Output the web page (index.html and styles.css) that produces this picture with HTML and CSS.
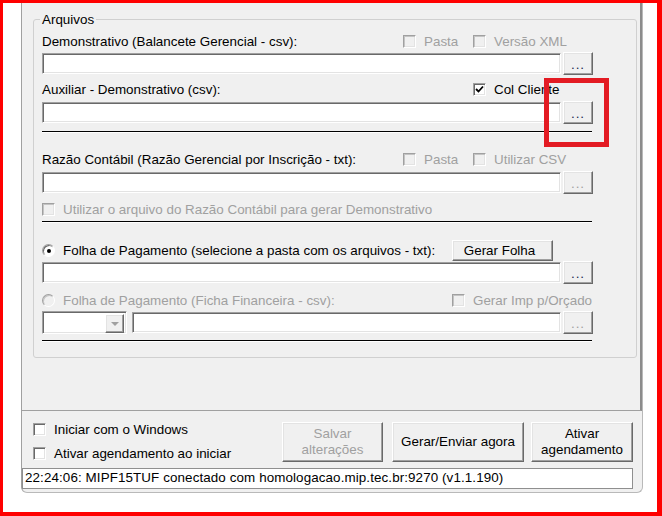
FILE: index.html
```html
<!DOCTYPE html>
<html lang="pt-BR">
<head>
<meta charset="UTF-8">
<meta name="viewport" content="width=device-width, initial-scale=1.0">
<title>Configuração de Arquivos</title>
<link rel="stylesheet" href="styles.css">
</head>
<body>
<div class="frame">
    <div class="window">
        <div class="main">
            <fieldset class="group">
                <legend>Arquivos</legend>

                <div class="row label-row">
                    <span class="label">Demonstrativo (Balancete Gerencial - csv):</span>
                    <span class="check disabled w70 push"><span class="box"></span>Pasta</span>
                    <span class="check disabled w120"><span class="box"></span>Versão XML</span>
                </div>
                <div class="row field-row mt3">
                    <span class="input"></span>
                    <span class="btn dots">...</span>
                </div>

                <div class="row label-row mt7">
                    <span class="label">Auxiliar - Demonstrativo (csv):</span>
                    <span class="check w120 push">
                        <span class="box"><svg width="9" height="9" viewBox="0 0 9 9"><path d="M1 4 L3.5 6.5 L8 1.5" fill="none" stroke="#000" stroke-width="1.8"/></svg></span>Col Cliente
                    </span>
                </div>
                <div class="row field-row mt4">
                    <span class="input"></span>
                    <span class="btn dots">...</span>
                </div>
                <div class="sep mt7"></div>

                <div class="row label-row mt19">
                    <span class="label">Razão Contábil (Razão Gerencial por Inscrição - txt):</span>
                    <span class="check disabled w70 push"><span class="box"></span>Pasta</span>
                    <span class="check disabled w120"><span class="box"></span>Utilizar CSV</span>
                </div>
                <div class="row field-row mt4">
                    <span class="input"></span>
                    <span class="btn dots disabled">...</span>
                </div>
                <div class="row label-row mt8">
                    <span class="check disabled"><span class="box"></span>Utilizar o arquivo do Razão Contábil para gerar Demonstrativo</span>
                </div>
                <div class="sep mt4"></div>

                <div class="row radio-row mt17">
                    <span class="check"><span class="radio on"></span>Folha de Pagamento (selecione a pasta com os arquivos - txt):</span>
                    <span class="btn folha push">Gerar Folha</span>
                </div>
                <div class="row field-row">
                    <span class="input"></span>
                    <span class="btn dots">...</span>
                </div>
                <div class="row label-row mt9">
                    <span class="check disabled"><span class="radio"></span>Folha de Pagamento (Ficha Financeira - csv):</span>
                    <span class="check disabled w141 push"><span class="box"></span>Gerar Imp p/Orçado</span>
                </div>
                <div class="row field-row mt3">
                    <span class="combo"><span class="btn combo-btn"><span class="arrow"></span></span></span>
                    <span class="input short"></span>
                    <span class="btn dots disabled">...</span>
                </div>
                <div class="sep mt6"></div>
            </fieldset>
        </div>

        <div class="controls">
            <div class="options">
                <span class="check"><span class="box"></span>Iniciar com o Windows</span>
                <span class="check"><span class="box"></span>Ativar agendamento ao iniciar</span>
            </div>
            <span class="btn big salvar disabled">Salvar<br>alterações</span>
            <span class="btn big gerar">Gerar/Enviar agora</span>
            <span class="btn big ativar">Ativar<br>agendamento</span>
        </div>
        <div class="status">22:24:06: MIPF15TUF conectado com homologacao.mip.tec.br:9270 (v1.1.190)</div>
    </div>

    <div class="highlight"></div>
</div>
</body>
</html>
```

FILE: styles.css
```css
* {
    box-sizing: border-box;
}

body {
    margin: 0;
    background: #fff;
    font-family: "Liberation Sans", Arial, sans-serif;
    font-size: 13.4px;
    line-height: 15px;
    color: #000;
}

.frame {
    position: relative;
    width: 662px;
    height: 516px;
    border-style: solid;
    border-color: #ff0000;
    border-width: 3px 5px 4px 3px;
    padding: 0 14px 0 18px;
    background: #fff;
}

.window {
    background: #f0f0f0;
    border: 1px solid #b9b9b9;
    border-top: none;
    border-left-color: #a0a0a0;
    border-radius: 0 0 6px 6px;
}

.main {
    height: 408px;
    padding: 9px 0 0 11px;
    border-right: 2px solid #8c8c8c;
    border-bottom: 1px solid #a0a0a0;
}

/* group box */
.group {
    margin: 0;
    width: 604px;
    padding: 7px 43px 15px 8px;
    border: 1px solid #d0d0d0;
    border-radius: 3px;
}

.group legend {
    padding: 0 2px;
    margin-left: -2px;
    line-height: 15px;
}

.row {
    display: flex;
    align-items: center;
}

.label-row {
    height: 15px;
}

.radio-row {
    height: 21px;
}

.field-row {
    height: 23px;
    align-items: flex-start;
}

.mt3 { margin-top: 3px; }
.mt4 { margin-top: 4px; }
.mt6 { margin-top: 6px; }
.mt7 { margin-top: 7px; }
.mt8 { margin-top: 8px; }
.mt9 { margin-top: 9px; }
.mt17 { margin-top: 17px; }
.mt19 { margin-top: 19px; }

.label {
    white-space: nowrap;
}

.push {
    margin-left: auto;
}

.w70 { width: 70px; }
.w120 { width: 120px; }
.w141 { width: 141px; }

/* check boxes and radios */
.check {
    display: flex;
    align-items: center;
    gap: 8px;
    white-space: nowrap;
}

.check.disabled {
    color: #a0a0a0;
}

.box {
    flex: none;
    display: flex;
    align-items: center;
    justify-content: center;
    width: 13px;
    height: 13px;
    background: #fff;
    border: 1px solid;
    border-color: #a0a0a0 #fff #fff #a0a0a0;
    box-shadow: inset 1px 1px #696969, inset -1px -1px #e3e3e3;
}

.disabled .box {
    background: #f0f0f0;
    box-shadow: inset 1px 1px #c4c4c4, inset -1px -1px #e3e3e3;
}

.radio {
    flex: none;
    display: flex;
    align-items: center;
    justify-content: center;
    width: 13px;
    height: 13px;
    border-radius: 50%;
    background: #fff;
    border: 1px solid;
    border-color: #a0a0a0 #fff #fff #a0a0a0;
    box-shadow: inset 1px 1px #696969;
}

.radio.on::after {
    content: "";
    width: 4px;
    height: 4px;
    border-radius: 50%;
    background: #000;
}

.disabled .radio {
    background: #f0f0f0;
    box-shadow: inset 1px 1px #c4c4c4;
}

/* edits and buttons */
.input {
    width: 519px;
    height: 21px;
    margin-top: 1px;
    background: #fff;
    border: 1px solid;
    border-color: #a0a0a0 #fff #fff #a0a0a0;
    box-shadow: inset 1px 1px #696969, inset -1px -1px #e3e3e3;
}

.input.short {
    width: 429px;
    margin-left: 5px;
}

.btn {
    display: flex;
    align-items: center;
    justify-content: center;
    text-align: center;
    background: #f0f0f0;
    border: 1px solid;
    border-color: #fff #696969 #696969 #fff;
    box-shadow: inset -1px -1px #a0a0a0, inset 1px 1px #e3e3e3;
}

.btn.disabled {
    color: #a0a0a0;
}

.dots {
    width: 30px;
    height: 23px;
    margin-left: 2px;
    padding-top: 2px;
    letter-spacing: 1px;
    color: #1c2a50;
}

.dots.disabled {
    color: #a0a0a0;
}

.folha {
    width: 101px;
    height: 21px;
    margin-right: 40px;
    padding-right: 6px;
}

.combo {
    display: flex;
    justify-content: flex-end;
    width: 85px;
    height: 23px;
    padding: 2px 2px 2px 0;
    background: #fff;
    border: 1px solid;
    border-color: #a0a0a0 #fff #fff #a0a0a0;
    box-shadow: inset 1px 1px #696969, inset -1px -1px #e3e3e3;
}

.combo-btn {
    width: 19px;
    height: 19px;
}

.arrow {
    width: 0;
    height: 0;
    border-left: 4px solid transparent;
    border-right: 4px solid transparent;
    border-top: 4px solid #a0a0a0;
}

.sep {
    width: 550px;
    height: 2px;
    border-top: 1px solid #000;
    border-bottom: 1px solid #fff;
}

/* bottom area */
.controls {
    display: flex;
    padding: 11px 9px 0 11px;
}

.options {
    flex: 1;
    display: flex;
    flex-direction: column;
    gap: 9px;
}

.options .check {
    height: 15px;
}

.big {
    height: 40px;
    line-height: 16px;
}

.salvar {
    width: 101px;
    margin-right: 9px;
}

.gerar {
    width: 132px;
    margin-right: 7px;
}

.ativar {
    width: 102px;
}

.status {
    height: 21px;
    margin: 6px 9px 3px 0;
    padding: 0 2px;
    line-height: 17px;
    letter-spacing: 0.1px;
    white-space: nowrap;
    background: #fff;
    border: 1px solid #8f8f8f;
}

/* annotation drawn over the screenshot */
.highlight {
    position: absolute;
    left: 541px;
    top: 75px;
    width: 65px;
    height: 69px;
    border: 5px solid #e31b23;
}
```
